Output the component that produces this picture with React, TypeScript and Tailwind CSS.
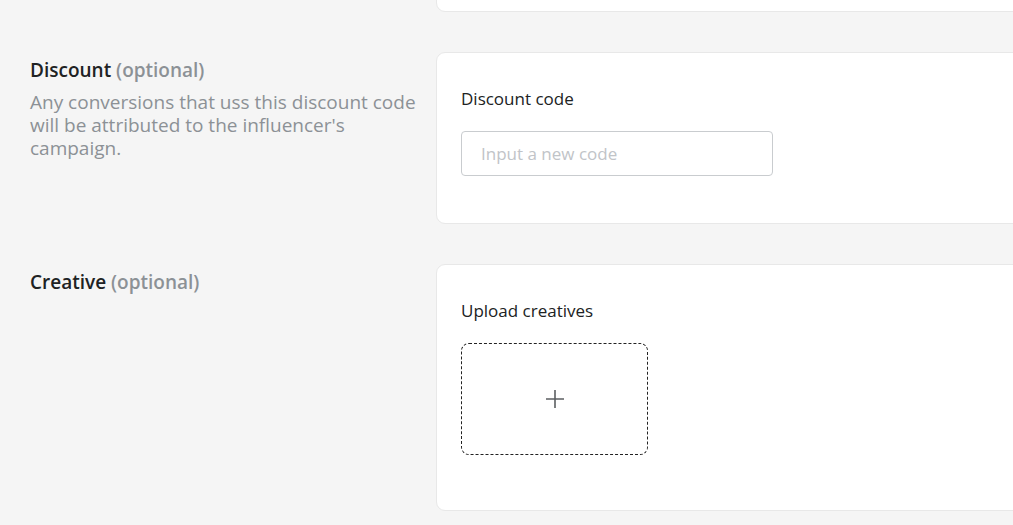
import React from "react";

const font = { fontFamily: '"Open Sans", "Noto Sans", sans-serif' };

function Section({
  title,
  desc,
  children,
}: {
  title: string;
  desc?: string;
  children: React.ReactNode;
}) {
  return (
    <div className="flex">
      <div className="w-[436px] shrink-0 pl-[30px] pr-[16px] pt-[6px]">
        <div className="text-[19px] leading-[24px] font-semibold text-[#202223]">
          {title} <span className="text-[#8c9196]">(optional)</span>
        </div>
        {desc && (
          <p className="mt-[9px] text-[19px] leading-[23px] text-[#8c9196]">{desc}</p>
        )}
      </div>
      <div className="w-[640px] shrink-0 rounded-[9px] border border-[#e8e8e8] bg-white">
        {children}
      </div>
    </div>
  );
}

export default function App() {
  return (
    <div className="w-[1013px] h-[525px] overflow-hidden bg-[#f5f5f5]" style={font}>
      <div className="flex">
        <div className="w-[436px] shrink-0" />
        <div className="mt-[-100px] h-[112px] w-[640px] shrink-0 rounded-[9px] border border-[#e8e8e8] bg-white" />
      </div>
      <div className="mt-[40px]">
        <Section
          title="Discount"
          desc="Any conversions that uss this discount code will be attributed to the influencer's campaign."
        >
          <div className="px-[24px] pt-[34px] pb-[47px]">
            <div className="text-[17px] leading-[24px] font-medium text-[#202223]">Discount code</div>
            <div className="mt-[20px] flex h-[45px] w-[312px] items-center rounded-[4px] border border-[#c9cccf] px-[19px]">
              <span className="text-[17px] text-[#c1c4c8]">Input a new code</span>
            </div>
          </div>
        </Section>
      </div>
      <div className="mt-[40px]">
        <Section title="Creative">
          <div className="px-[24px] pt-[34px] pb-[55px]">
            <div className="text-[17px] leading-[24px] font-medium text-[#202223]">Upload creatives</div>
            <div className="mt-[20px] flex h-[112px] w-[187px] items-center justify-center rounded-[8px] border border-dashed border-[#222]">
              <svg width="20" height="20" viewBox="0 0 20 20" fill="none">
                <path d="M10 1v18M1 10h18" stroke="#5c5f62" strokeWidth="1.6" />
              </svg>
            </div>
          </div>
        </Section>
      </div>
    </div>
  );
}
